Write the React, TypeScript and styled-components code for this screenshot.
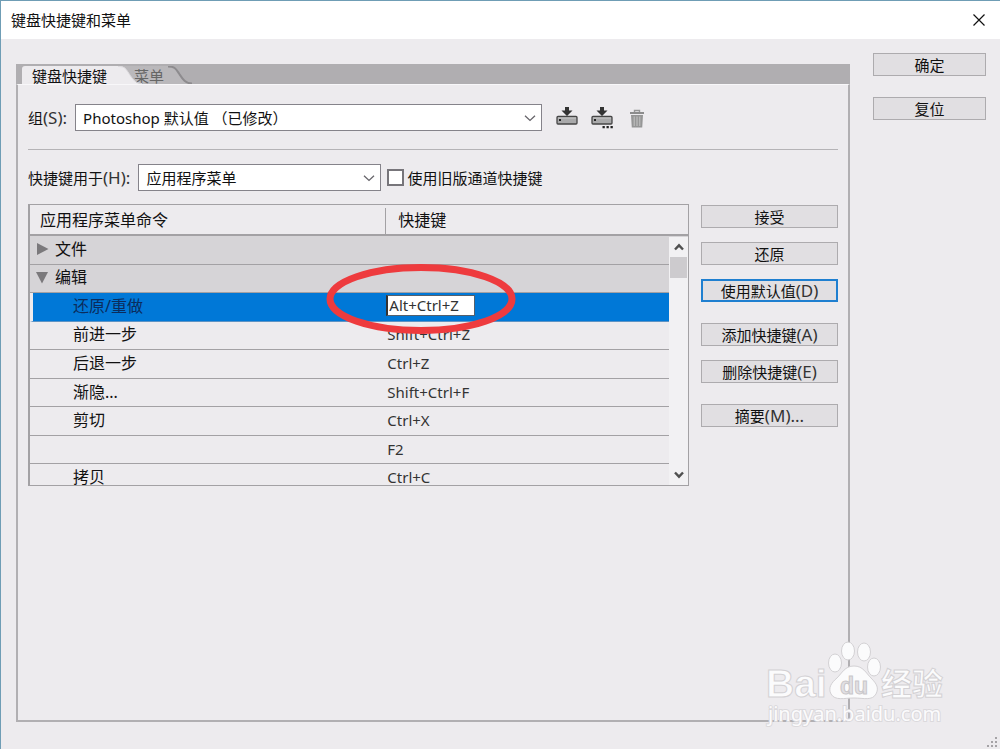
import React from "react";
import styled, { createGlobalStyle, css } from "styled-components";

const ink = "#111";
const face = "#edebee";
const line = "#a3a1a4";

const GlobalStyle = createGlobalStyle`
  *, *::before, *::after { box-sizing: border-box; }
  body { margin: 0; background: ${face}; }
  body, button, input, select {
    font-family: "Noto Sans", "Noto Sans CJK SC", sans-serif;
    font-size: 15px;
    line-height: 20px;
    color: ${ink};
  }
`;

const Dialog = styled.main`
  position: relative;
  display: flex;
  flex-direction: column;
  min-height: 100vh;
  overflow: hidden;
  background: ${face};
  border-top: 1px solid #6f9db5;
  border-left: 1px solid #6f9db5;
`;

const TitleBar = styled.header`
  display: flex;
  align-items: center;
  justify-content: space-between;
  height: 38px;
  padding: 0 15px 0 10px;
  background: #fff;
`;

const Title = styled.h1`
  margin: 0;
  font-size: 15px;
  font-weight: 400;
`;

const PlainButton = styled.button`
  display: flex;
  padding: 0;
  border: 0;
  background: none;
`;

const Body = styled.div`
  display: flex;
  flex: 1;
  gap: 23px;
  padding: 14px 14px 27px 15px;
`;

const Panel = styled.section`
  display: flex;
  flex: 1;
  flex-direction: column;
  min-width: 0;
  margin-top: 11px;
`;

const TabStrip = styled.div`
  display: flex;
  align-items: flex-end;
  height: 20px;
  padding-left: 6px;
  background: #b0aeb1;
`;

const Tab = styled.button<{ $active?: boolean }>`
  position: relative;
  z-index: ${(p) => (p.$active ? 1 : 0)};
  height: 18px;
  padding: ${(p) => (p.$active ? "0 11px 0 10px" : "0 4px 0 16px")};
  border: 0;
  border-top-left-radius: 3px;
  background: ${(p) => (p.$active ? face : "#bab8bb")};
  color: ${(p) => (p.$active ? ink : "#666")};
`;

const TabTail = styled.svg`
  position: absolute;
  top: 0;
  left: 100%;
`;

const TabPage = styled.div`
  flex: 1;
  padding: 19px 10px 20px;
  border: 2px solid #b1afb2;
  border-top: 1px solid #f8f7f9;
`;

const FieldRow = styled.div`
  display: flex;
  align-items: center;
  height: 27px;
  white-space: nowrap;
`;

const FieldLabel = styled.label`
  margin-right: 8px;
`;

const AccessKey = styled.span`
  font-size: 17px;
  line-height: 18px;
  color: #333;
`;

const SelectBox = styled.span<{ $width: number }>`
  display: grid;
  flex: 0 1 ${(p) => p.$width}px;
  align-items: center;
  min-width: 0;
  height: 27px;
  border: 1px solid #85838a;
  background: #fff;

  > * { grid-area: 1 / 1; }
  > svg { justify-self: end; margin-right: 5px; pointer-events: none; }
`;

const Select = styled.select`
  appearance: none;
  width: 100%;
  height: 25px;
  padding: 0 24px 0 7px;
  border: 0;
  background: none;
`;

const Tools = styled.div`
  display: flex;
  gap: 13px;
  margin-left: 14px;
`;

const Divider = styled.hr`
  height: 1px;
  margin: 18px 0 14px;
  border: 0;
  background: #b5b3b6;
`;

const CheckLabel = styled.label`
  display: flex;
  align-items: center;
  gap: 3px;
  margin-left: 6px;
`;

const Checkbox = styled.input`
  appearance: none;
  width: 17px;
  height: 17px;
  margin: 0;
  border: 2px solid #77757a;
  background: #fff;
`;

const Editor = styled.div`
  display: flex;
  gap: 12px;
  margin-top: 13px;
`;

const ListBox = styled.div`
  position: relative;
  flex: 1;
  min-width: 0;
  height: 282px;
`;

const ListView = styled.div`
  height: 100%;
  overflow: hidden;
  border: 1px solid ${line};
  border-left-width: 2px;
`;

const CommandTable = styled.table`
  width: 100%;
  height: 288px;
  border-spacing: 0;
  table-layout: fixed;
  font-size: 16px;
`;

const HeadCell = styled.th<{ $wide?: boolean }>`
  width: ${(p) => (p.$wide ? "54%" : "auto")};
  height: 31px;
  padding: 3px 0 0;
  border-bottom: 2px solid ${line};
  font-weight: 400;
  text-align: left;

  > span {
    display: block;
    height: 26px;
    padding-left: ${(p) => (p.$wide ? 10 : 12)}px;
    border-left: ${(p) => (p.$wide ? "0" : `1px solid ${line}`)};
    line-height: 24px;
  }
`;

type Kind = "group" | "selected" | "item";

const Row = styled.tr<{ $kind: Kind }>`
  ${(p) => p.$kind === "group" && css`background: #d6d4d7;`}
  ${(p) => p.$kind === "selected" && css`background: #0078d7;`}
`;

const Cell = styled.td<{ $kind: Kind }>`
  padding: 0 0 2px;
  border-bottom: 1px solid ${(p) => (p.$kind === "selected" ? "#5d93c4" : line)};
  line-height: 24px;
  white-space: nowrap;
`;

const NameCell = styled(Cell)`
  padding-left: ${(p) => (p.$kind === "group" ? 6 : 43)}px;
  ${(p) => p.$kind === "selected" && css`
    padding-left: 40px;
    border-left: 3px solid ${face};
    color: #0b2c5c;
  `}
`;

const KeyCell = styled(Cell)`
  position: relative;
  padding-left: ${(p) => (p.$kind === "selected" ? 1 : 2)}px;
  color: #333;
  font-size: 15px;
`;

const GroupName = styled.span`
  display: flex;
  align-items: center;
  gap: 6px;
`;

const ShortcutInput = styled.input`
  display: block;
  width: 89px;
  height: 21px;
  padding: 0 0 1px 1px;
  border: 1px solid #55606c;
  border-left: 2px solid #333;
  background: #fff;
  color: #333;
`;

const Ring = styled.svg`
  position: absolute;
  z-index: 2;
  top: -31px;
  left: -60px;
  pointer-events: none;
`;

const Scrollbar = styled.div`
  position: absolute;
  top: 33px;
  right: 1px;
  bottom: 1px;
  display: flex;
  flex-direction: column;
  align-items: center;
  width: 19px;
  padding: 5px 0;
  background: #f2f1f3;
`;

const Thumb = styled.div`
  width: 17px;
  height: 21px;
  margin: 5px 0 auto;
  background: #cdcbce;
`;

const Actions = styled.div`
  display: flex;
  flex: 0 0 137px;
  flex-direction: column;
  gap: 21px;
  padding-top: 1px;
`;

const ActionGroup = styled.div`
  display: flex;
  flex-direction: column;
  gap: 14px;
`;

const PushButton = styled.button<{ $default?: boolean }>`
  height: 23px;
  padding: 0;
  border: ${(p) => (p.$default ? "2px solid #1f7fd0" : "1px solid #adabae")};
  background: #e1dfe2;
  line-height: 18px;
  white-space: nowrap;
`;

const MainButtons = styled.div`
  display: flex;
  flex: 0 0 113px;
  flex-direction: column;
  gap: 21px;
`;

const Watermark = styled.svg`
  position: absolute;
  right: 50px;
  bottom: 16px;
  pointer-events: none;
`;

const Grip = styled.svg`
  position: absolute;
  right: 1px;
  bottom: 1px;
`;

const Chevron = ({ up, bold }: { up?: boolean; bold?: boolean }) => (
  <svg width="12" height="10" viewBox="0 0 12 10" fill="none" aria-hidden="true">
    <path
      d={up ? "M2 7.5 6 3.3l4 4.2" : bold ? "M2 2.5l4 4.2 4-4.2" : "M1 2.8l5 4.6 5-4.6"}
      stroke={bold ? "#505050" : "#66646a"}
      strokeWidth={bold ? 2.4 : 1.3}
    />
  </svg>
);

const SaveIcon = ({ dots }: { dots?: boolean }) => (
  <svg width="22" height="24" viewBox="0 0 22 24" aria-hidden="true">
    <rect x="1" y="10.5" width="20" height="7.5" rx="1" fill="#a9a9aa" stroke="#454545" strokeWidth="1.3" />
    <path d="M2 12h18" stroke="#c9c9c9" strokeWidth="1" />
    <rect x="3" y="13" width="2" height="2" fill="#222" />
    <path d="M9 1h4v3.5h3.500L11 10 5.500 4.500H9z" fill="#333" />
    {dots && <path d="M11.500 20h2.300v2.300h-2.300zM15.500 20h2.300v2.300h-2.300zM19.500 20h2.300v2.300h-2.300z" fill="#222" />}
  </svg>
);

const TrashIcon = () => (
  <svg width="22" height="24" viewBox="-3 0 22 24" aria-hidden="true">
    <path d="M5.500 6V4.500h5V6" fill="none" stroke="#969696" strokeWidth="1.400" />
    <path d="M1 6h14v2H1z" fill="#8c8c8c" />
    <path d="M2 9h12l-.8 12.500H2.800z" fill="#969696" />
    <path d="M5.200 10.500v9.500M8 10.500v9.500M10.800 10.500v9.500" stroke="#c4c4c4" strokeWidth="1" />
  </svg>
);

const Triangle = ({ open }: { open?: boolean }) => (
  <svg width="13" height="13" viewBox="0 0 13 13" aria-hidden="true">
    <path d={open ? "M0 1h12L6 12.500z" : "M1 1l11.500 6L1 13z"} fill="#7b797c" />
  </svg>
);

const Tail = ({ active }: { active?: boolean }) => (
  <TabTail width="24" height="18" viewBox="0 0 24 18" aria-hidden="true">
    <path d="M0 0C7 0 8 3 11 7.500S17 18 24 18H0z" fill={active ? face : "#bab8bb"} />
    <path
      d="M0 .5C7 .5 8 3 11 7.500S17 17.500 24 17.500"
      fill="none"
      stroke={active ? "#dddbde" : "#8d8b8e"}
      strokeWidth={active ? 1 : 2}
    />
  </TabTail>
);

interface Command {
  name: string;
  keys?: string;
  kind: Kind;
  open?: boolean;
}

const commands: Command[] = [
  { name: "文件", kind: "group" },
  { name: "编辑", kind: "group", open: true },
  { name: "还原/重做", keys: "Alt+Ctrl+Z", kind: "selected" },
  { name: "前进一步", keys: "Shift+Ctrl+Z", kind: "item" },
  { name: "后退一步", keys: "Ctrl+Z", kind: "item" },
  { name: "渐隐...", keys: "Shift+Ctrl+F", kind: "item" },
  { name: "剪切", keys: "Ctrl+X", kind: "item" },
  { name: "", keys: "F2", kind: "item" },
  { name: "拷贝", keys: "Ctrl+C", kind: "item" },
];

const CommandRow = ({ name, keys, kind, open }: Command) => (
  <Row $kind={kind}>
    <NameCell $kind={kind}>
      {kind === "group" ? (
        <GroupName>
          <Triangle open={open} />
          {name}
        </GroupName>
      ) : (
        name
      )}
    </NameCell>
    <KeyCell $kind={kind}>
      {kind === "selected" ? (
        <>
          <ShortcutInput aria-label={name} defaultValue={keys} />
          <Ring width="192" height="74" viewBox="0 0 192 74" fill="none" aria-hidden="true">
            <ellipse cx="96" cy="37" rx="91" ry="31.500" stroke="#ee3b3e" strokeWidth="7" />
          </Ring>
        </>
      ) : (
        keys
      )}
    </KeyCell>
  </Row>
);

export default function App() {
  return (
    <>
      <GlobalStyle />
      <Dialog>
        <TitleBar>
          <Title>键盘快捷键和菜单</Title>
          <PlainButton aria-label="关闭">
            <svg width="12" height="12" viewBox="0 0 12 12" aria-hidden="true">
              <path d="M.5.5l11 11M11.500.5l-11 11" stroke="#111" strokeWidth="1.200" />
            </svg>
          </PlainButton>
        </TitleBar>
        <Body>
          <Panel>
            <TabStrip role="tablist">
              <Tab $active role="tab" aria-selected="true">
                键盘快捷键
                <Tail active />
              </Tab>
              <Tab role="tab" aria-selected="false">
                菜单
                <Tail />
              </Tab>
            </TabStrip>
            <TabPage>
              <FieldRow>
                <FieldLabel htmlFor="set">组<AccessKey>(S):</AccessKey></FieldLabel>
                <SelectBox $width={467}>
                  <Select id="set">
                    <option>Photoshop 默认值 （已修改）</option>
                  </Select>
                  <Chevron />
                </SelectBox>
                <Tools>
                  <PlainButton aria-label="存储"><SaveIcon /></PlainButton>
                  <PlainButton aria-label="存储为"><SaveIcon dots /></PlainButton>
                  <PlainButton aria-label="删除"><TrashIcon /></PlainButton>
                </Tools>
              </FieldRow>
              <Divider />
              <FieldRow>
                <FieldLabel htmlFor="scope">快捷键用于<AccessKey>(H):</AccessKey></FieldLabel>
                <SelectBox $width={243}>
                  <Select id="scope">
                    <option>应用程序菜单</option>
                  </Select>
                  <Chevron />
                </SelectBox>
                <CheckLabel>
                  <Checkbox type="checkbox" />
                  使用旧版通道快捷键
                </CheckLabel>
              </FieldRow>
              <Editor>
                <ListBox>
                  <ListView>
                    <CommandTable>
                      <thead>
                        <tr>
                          <HeadCell $wide><span>应用程序菜单命令</span></HeadCell>
                          <HeadCell><span>快捷键</span></HeadCell>
                        </tr>
                      </thead>
                      <tbody>
                        {commands.map((c) => (
                          <CommandRow key={c.name + c.keys} {...c} />
                        ))}
                      </tbody>
                    </CommandTable>
                  </ListView>
                  <Scrollbar>
                    <Chevron up bold />
                    <Thumb />
                    <Chevron bold />
                  </Scrollbar>
                </ListBox>
                <Actions>
                  <ActionGroup>
                    <PushButton>接受</PushButton>
                    <PushButton>还原</PushButton>
                    <PushButton $default>使用默认值<AccessKey>(D)</AccessKey></PushButton>
                  </ActionGroup>
                  <ActionGroup>
                    <PushButton>添加快捷键<AccessKey>(A)</AccessKey></PushButton>
                    <PushButton>删除快捷键<AccessKey>(E)</AccessKey></PushButton>
                  </ActionGroup>
                  <PushButton>摘要<AccessKey>(M)...</AccessKey></PushButton>
                </Actions>
              </Editor>
            </TabPage>
          </Panel>
          <MainButtons>
            <PushButton>确定</PushButton>
            <PushButton>复位</PushButton>
          </MainButtons>
        </Body>
        <Watermark width="186" height="92" viewBox="0 0 186 92" fill="#fbfbfc" stroke="#d3d1d4" strokeWidth="1">
          <text x="2" y="56" fontFamily="Liberation Sans, sans-serif" fontWeight="700" fontSize="39">Bai</text>
          <ellipse cx="71" cy="22" rx="6.500" ry="9" />
          <ellipse cx="84" cy="10" rx="6.500" ry="9" />
          <ellipse cx="100" cy="11" rx="6.500" ry="9" />
          <ellipse cx="110" cy="26" rx="6.500" ry="9" />
          <path d="M90 25c9 0 12 7 17 12 6 6 8 10 5 16-4 7-12 4-22 4s-19 3-23-4c-3-6 0-11 6-16 5-5 8-12 17-12z" />
          <text x="76" y="53" fontFamily="Liberation Sans, sans-serif" fontWeight="700" fontSize="23" fill="#e2e0e3" stroke="#c9c7ca">du</text>
          <text x="117" y="54" fontFamily="Noto Sans CJK SC, sans-serif" fontWeight="700" fontSize="31">经验</text>
          <text x="4" y="80" fontFamily="Noto Sans, sans-serif" fontSize="20" strokeWidth="2" paintOrder="stroke" stroke="#dbd9dc">jingyan.baidu.com</text>
        </Watermark>
        <Grip width="12" height="12" viewBox="0 0 12 12" fill="#a5a3a6" aria-hidden="true">
          <path d="M8 1h2v2H8zM8 5h2v2H8zM8 9h2v2H8zM4 5h2v2H4zM4 9h2v2H4zM0 9h2v2H0z" />
        </Grip>
      </Dialog>
    </>
  );
}
